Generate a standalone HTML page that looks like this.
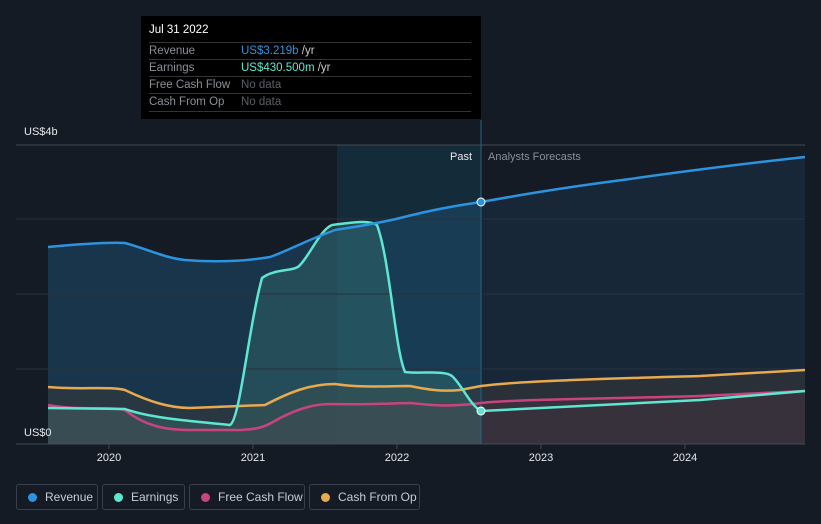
<!DOCTYPE html>
<html><head><meta charset="utf-8"><style>
body{margin:0;width:821px;height:524px;background:#151b25;overflow:hidden;font-family:"Liberation Sans",sans-serif;}
.tt{position:absolute;left:141px;top:16px;width:340px;height:103px;background:#000;color:#fff;font-size:11.5px}
.tt .r{position:absolute;left:8px;width:322px;border-top:1px solid #333;height:17px;line-height:17px;color:#8a8f96}
.tt .r span{position:absolute;left:92px}
.leg{position:absolute;top:484px;height:26px;border:1px solid #3a404a;border-radius:3px;color:#c8ccd2;font-size:12px;line-height:25px;box-sizing:border-box}
.leg i{position:absolute;left:11px;top:8px;width:9px;height:9px;border-radius:50%}
</style></head><body>
<svg width="821" height="524" style="position:absolute;left:0;top:0">
<rect x="337" y="145" width="144" height="299" fill="#14303f" opacity=".8"/>
<path d="M48,247 C80,244 110,242 125,243 C150,250 165,258 185,260 C210,262 240,262 270,257 C290,250 300,243 335,230 C360,226 380,223 400,218 C420,213 440,208 481,202 L481,444 L48,444Z" fill="#1d4a6e" opacity=".55"/>
<path d="M481,202 C520,195 560,188 630,179 C700,169 760,162 805,157 L805,444 L481,444Z" fill="#1c3248" opacity=".55"/>
<path d="M48,387 C80,390 110,386 125,390 C150,402 170,408 190,408 L265,405 C290,392 310,384 335,384 C360,388 390,386 410,386 C425,389 440,392 460,390 L481,386 C520,381 600,379 700,376 L805,370 L805,444 L48,444Z" fill="#3a3a38" opacity=".5"/>
<path d="M48,405 C80,411 110,406 125,410 C145,426 165,430 190,430 L240,430 C260,429 265,427 280,418 C300,408 315,404 330,404 C370,405 395,403 410,403 C425,404 440,408 481,403 C520,399 600,399 700,396 L805,391 L805,444 L48,444Z" fill="#4a3442" opacity=".45"/>
<path d="M48,408 L125,409 C150,418 190,421 230,425 C240,420 248,330 262,278 C275,268 295,272 300,265 C310,255 320,230 332,225 C355,222 370,220 377,225 C390,260 395,350 405,372 C420,374 445,370 452,376 C462,385 470,405 481,411 L481,444 L48,444Z" fill="#3d7a74" opacity=".35"/>
<g stroke="#2a313b" stroke-width="1"><line x1="16" y1="145" x2="805" y2="145" stroke="#444b55"/><line x1="16" y1="219" x2="805" y2="219"/><line x1="16" y1="294" x2="805" y2="294"/><line x1="16" y1="369" x2="805" y2="369"/><line x1="16" y1="444" x2="805" y2="444" stroke="#444b55"/></g>
<line x1="481" y1="120" x2="481" y2="444" stroke="#2c6080"/>
<g fill="none" stroke-width="2.5">
<path d="M48,387 C80,390 110,386 125,390 C150,402 170,408 190,408 L265,405 C290,392 310,384 335,384 C360,388 390,386 410,386 C425,389 440,392 460,390 L481,386 C520,381 600,379 700,376 L805,370" stroke="#e8a94f"/>
<path d="M48,405 C80,411 110,406 125,410 C145,426 165,430 190,430 L240,430 C260,429 265,427 280,418 C300,408 315,404 330,404 C370,405 395,403 410,403 C425,404 440,408 481,403 C520,399 600,399 700,396 L805,391" stroke="#c8447e"/>
<path d="M48,408 L125,409 C150,418 190,421 230,425 C240,420 248,330 262,278 C275,268 295,272 300,265 C310,255 320,230 332,225 C355,222 370,220 377,225 C390,260 395,350 405,372 C420,374 445,370 452,376 C462,385 470,405 481,411 C540,408 600,405 700,400 L805,391" stroke="#5ee6d0"/>
<path d="M48,247 C80,244 110,242 125,243 C150,250 165,258 185,260 C210,262 240,262 270,257 C290,250 300,243 335,230 C360,226 380,223 400,218 C420,213 440,208 481,202 C520,195 560,188 630,179 C700,169 760,162 805,157" stroke="#2b93e0"/>
</g>
<circle cx="481" cy="202" r="4" fill="#2b93e0" stroke="#fff" stroke-width="1"/>
<circle cx="481" cy="411" r="4" fill="#5ee6d0" stroke="#fff" stroke-width="1"/>
<g stroke="#444b55"><line x1="109" y1="444" x2="109" y2="449"/><line x1="253" y1="444" x2="253" y2="449"/><line x1="397" y1="444" x2="397" y2="449"/><line x1="541" y1="444" x2="541" y2="449"/><line x1="685" y1="444" x2="685" y2="449"/></g>
<g fill="#e6e8ea" font-size="11" text-anchor="middle"><text x="109" y="461">2020</text><text x="253" y="461">2021</text><text x="397" y="461">2022</text><text x="541" y="461">2023</text><text x="685" y="461">2024</text></g>
<text x="24" y="135" fill="#e6e8ea" font-size="11">US$4b</text>
<text x="24" y="436" fill="#e6e8ea" font-size="11">US$0</text>
<text x="472" y="160" fill="#e6e8ea" font-size="11" text-anchor="end">Past</text>
<text x="488" y="160" fill="#8a8f96" font-size="11">Analysts Forecasts</text>
</svg>
<div class="tt">
<div style="position:absolute;left:8px;top:8px">Jul 31 2022</div>
<div class="r" style="top:26px">Revenue<span><b style="font-weight:normal;color:#2b93e0">US$3.219b</b> <span style="position:static;color:#c8ccd2">/yr</span></span></div>
<div class="r" style="top:43px">Earnings<span><b style="font-weight:normal;color:#5ee6d0">US$430.500m</b> <span style="position:static;color:#c8ccd2">/yr</span></span></div>
<div class="r" style="top:60px">Free Cash Flow<span style="color:#5a5f66">No data</span></div>
<div class="r" style="top:77px;border-bottom:1px solid #333">Cash From Op<span style="color:#5a5f66">No data</span></div>
</div>
<div class="leg" style="left:16px;width:82px"><i style="background:#2b93e0"></i><span style="position:absolute;left:28px">Revenue</span></div>
<div class="leg" style="left:102px;width:83px"><i style="background:#5ee6d0"></i><span style="position:absolute;left:28px">Earnings</span></div>
<div class="leg" style="left:189px;width:116px"><i style="background:#c8447e"></i><span style="position:absolute;left:28px">Free Cash Flow</span></div>
<div class="leg" style="left:309px;width:111px"><i style="background:#e8a94f"></i><span style="position:absolute;left:28px">Cash From Op</span></div>
</body></html>
